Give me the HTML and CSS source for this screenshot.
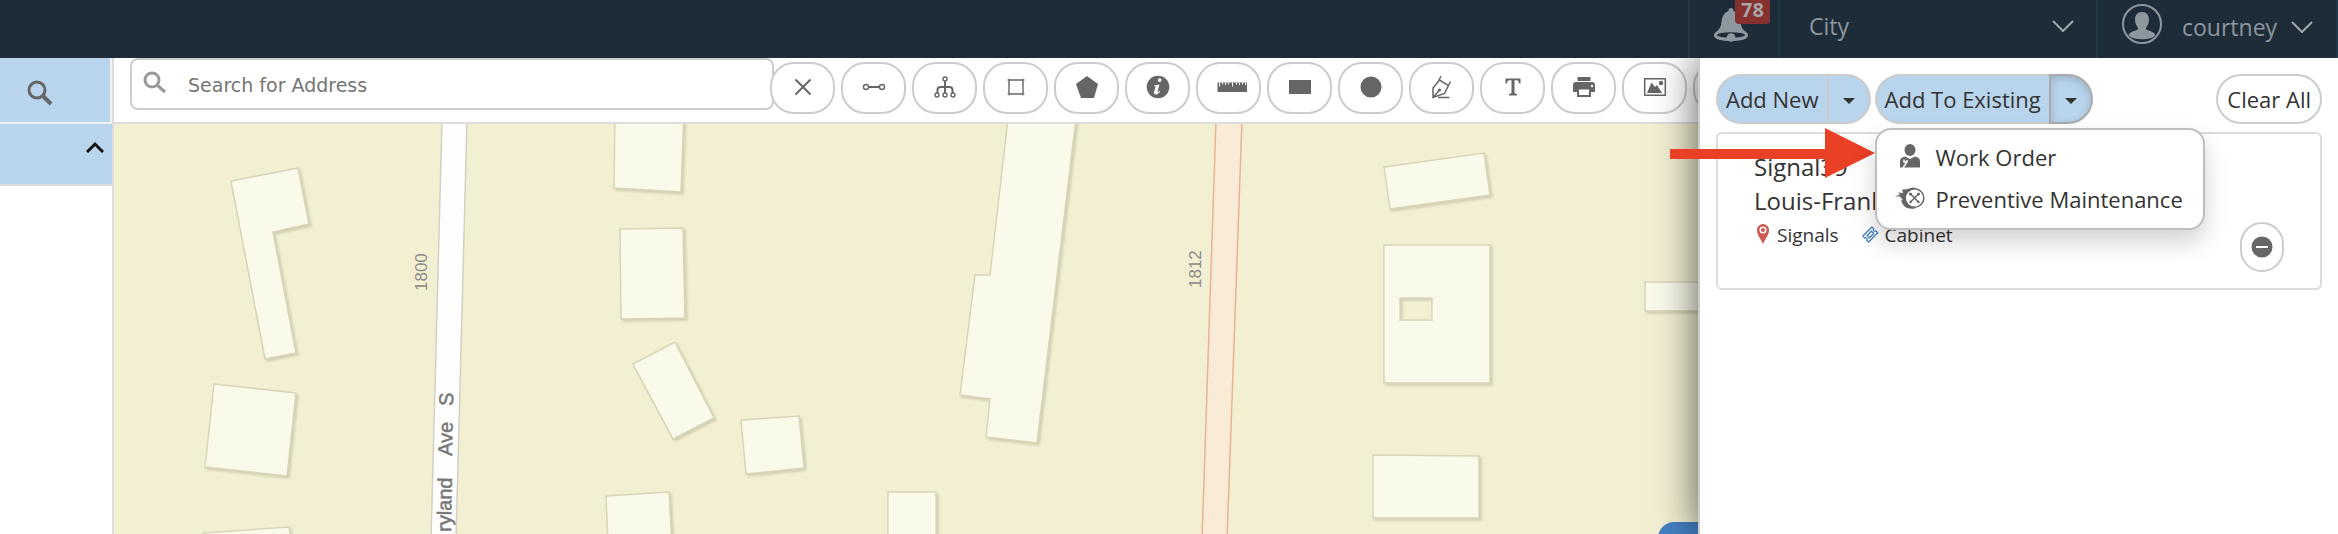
FILE: index.html
```html
<!DOCTYPE html>
<html lang="en">
<head>
<meta charset="utf-8">
<title>Asset map</title>
<link rel="stylesheet" href="styles.css">
</head>
<body>
<header class="topbar">
  <button class="topbar-cell alerts" aria-label="Notifications, 78 new">
    <svg class="bell" viewBox="0 0 34 34" aria-hidden="true"><path d="M17 0c1.600 0 2.500 1.300 2.500 3 4.500 1.500 6.500 6 7 11 .5 5 2.500 8 5.500 10 1.500 1 2 2 2 3.500C34 31.500 26 33 17 33S0 31.500 0 27.500C0 26 .5 25 2 24c3-2 5-5 5.500-10 .5-5 2.500-9.500 7-11 0-1.700.9-3 2.500-3z"/><ellipse class="bell-mouth" cx="17" cy="27" rx="14" ry="2.800"/><circle cx="17" cy="29.500" r="4.300"/></svg>
    <span class="badge">78</span>
  </button>
  <div class="topbar-cell city">
    <select class="city-select" aria-label="Organization"><option>City</option></select>
    <svg class="chevron" viewBox="0 0 22 12" aria-hidden="true"><path d="M1 1l10 10L21 1"/></svg>
  </div>
  <button class="topbar-cell user">
    <svg class="avatar" viewBox="0 0 40 40" aria-hidden="true"><circle class="avatar-ring" cx="20" cy="20" r="19"/><path d="M20 8c4.500 0 7 3 7 7.500 0 3-1 5.500-2.500 7.500-.8 1.200-.5 2.800 1 3.300 4 1.200 6.500 2 8 5-3 3.200-8 4-13.500 4s-10.500-.8-13.500-4c1.500-3 4-3.800 8-5 1.500-.5 1.800-2.100 1-3.300C14 21 13 18.500 13 15.500 13 11 15.500 8 20 8z"/></svg>
    <span>courtney</span>
    <svg class="chevron" viewBox="0 0 22 12" aria-hidden="true"><path d="M1 1l10 10L21 1"/></svg>
  </button>
</header>
<main class="workspace">
  <aside class="sidebar">
    <button class="side-search" aria-label="Search">
      <svg viewBox="0 0 26 26" aria-hidden="true"><circle cx="10" cy="10" r="8"/><path d="M16 16l8 8"/></svg>
    </button>
    <button class="side-toggle" aria-label="Collapse section">
      <svg viewBox="0 0 18 12" aria-hidden="true"><path d="M1 11l8-8 8 8"/></svg>
    </button>
  </aside>
  <section class="mapview">
    <div class="toolbar">
      <label class="address">
        <svg viewBox="0 0 24 24" aria-hidden="true"><circle cx="9" cy="9" r="7"/><path d="M14 14l8 7"/></svg>
        <input type="text" placeholder="Search for Address" aria-label="Search for Address">
      </label>
      <button class="tool" aria-label="Clear"><svg viewBox="0 0 32 24"><path class="line" d="M8.500 4.500l15 15M23.500 4.500l-15 15"/></svg></button>
      <button class="tool" aria-label="Line"><svg viewBox="0 0 32 24"><path class="line" d="M10 12h12"/><circle class="thin" cx="8" cy="12" r="2.500"/><circle class="thin" cx="24" cy="12" r="2.500"/></svg></button>
      <button class="tool" aria-label="Network"><svg viewBox="0 0 32 24"><path class="line" d="M16 6v12M8.500 18v-3q0-3 3-3h9q3 0 3 3v3"/><circle class="thin" cx="16" cy="4" r="2"/><circle class="thin" cx="8" cy="20" r="2"/><circle class="thin" cx="16" cy="20" r="2"/><circle class="thin" cx="24" cy="20" r="2"/></svg></button>
      <button class="tool" aria-label="Extent"><svg viewBox="0 0 32 24"><path class="thin" d="M9 5h14v14H9z"/><circle class="thin tiny" cx="9" cy="5" r="1"/><circle class="thin tiny" cx="23" cy="5" r="1"/><circle class="thin tiny" cx="9" cy="19" r="1"/><circle class="thin tiny" cx="23" cy="19" r="1"/></svg></button>
      <button class="tool" aria-label="Polygon"><svg viewBox="0 0 32 24"><path d="M16 1l11 8-4 14H10L5 9z"/></svg></button>
      <button class="tool" aria-label="Information"><svg viewBox="0 0 32 24"><circle cx="16" cy="12" r="11.300"/><path class="cut" d="M16 4.500a1.800 1.800 0 1 1 2.500 2.200A1.800 1.800 0 0 1 16 4.500zM12 10.500l5.500-1-2 7c-.3 1 .5.800 2-.8l.7.600c-1.700 2.300-3 3.200-4.500 3.200-1.600 0-2-1.200-1.500-3l1.200-4.200c.3-.9 0-1.100-1.400-1z"/></svg></button>
      <button class="tool" aria-label="Measure"><svg class="wide" viewBox="0 0 32 24"><path d="M1.500 7.500h29.500V17H1.500z"/><path class="cut" d="M3 7.500h1v4H3zM6 7.500h1v2H6zM9 7.500h1v2.500H9zM12 7.500h1v2h-1zM16 7.500h1v4h-1zM20 7.500h1v2h-1zM23 7.500h1v2.500h-1zM26 7.500h1v2h-1zM29 7.500h1v2.500h-1z"/></svg></button>
      <button class="tool" aria-label="Rectangle"><svg viewBox="0 0 32 24"><path d="M5 5h22v14H5z"/></svg></button>
      <button class="tool" aria-label="Circle"><svg viewBox="0 0 32 24"><circle cx="16" cy="12" r="10.500"/></svg></button>
      <button class="tool" aria-label="Freehand"><svg viewBox="0 0 32 24"><path class="pen" d="M7 22.500V13l6.500-8 9 5.500-4 8zM7 22.500l6-7M15 1l-2 4M22.500 10.500l2-4M12 22.500h11.500"/><circle cx="13.500" cy="15" r="1.600"/></svg></button>
      <button class="tool" aria-label="Text"><svg viewBox="0 0 32 24"><path d="M8.500 3.500h15v5H22c-.3-2.200-.8-3.200-2.500-3.200h-2V17c0 1.400.5 1.800 2.500 2v1.500h-8V19c2-.2 2.500-.6 2.500-2V5.300h-2c-1.700 0-2.200 1-2.500 3.200H8.500z"/></svg></button>
      <button class="tool" aria-label="Print"><svg viewBox="0 0 32 24"><path d="M9.500 2h13v4h-13zM8 7h16q3 0 3 3v7h-4v5H9v-5H5v-7q0-3 3-3z"/><path class="cut" d="M11 14.500h10V20H11z"/><circle class="cut" cx="24" cy="11" r="1.200"/></svg></button>
      <button class="tool" aria-label="Image"><svg viewBox="0 0 32 24"><path class="frame" d="M5.700 3.700h20.600v16.600H5.700z"/><path d="M8 18l4.500-10.500L16 12l2-2 5 8z"/><circle cx="22" cy="8" r="2.200"/></svg></button>
      <button class="tool" aria-label="More tools"></button>
    </div>
    <div class="canvas">
      <svg class="basemap" viewBox="114 124 1584 410" preserveAspectRatio="xMinYMin slice" role="img" aria-label="Street map">
        <path class="street" d="M442 120L431 540H456L467 120z"/>
        <path class="avenue" d="M1216 120L1202 540H1227L1242 120z"/>
        <g class="buildings">
          <path d="M231 181L298 168L309 224L273 232L296 353L265 359z"/>
          <path d="M214 384L296 393L287 476L205 467z"/>
          <path d="M203 533L289 527L293 550H204z"/>
          <path d="M615 110H684L681 192L614 188z"/>
          <path d="M620 229L683 228L685 318L621 319z"/>
          <path d="M633 364L675 342L714 418L673 439z"/>
          <path d="M741 420L799 416L804 468L746 474z"/>
          <path d="M606 496L669 492L672 545H608z"/>
          <path d="M888 492H936V545H888z"/>
          <path d="M1009 110H1077L1037 443L986 437L990 399L960 395L975 275L990 275z"/>
          <path d="M1384 167L1484 153L1490 195L1390 209z"/>
          <path fill-rule="evenodd" d="M1384 245H1490V383H1384zM1400 298V320H1432V298z"/>
          <path d="M1373 455L1479 456V518H1373z"/>
          <path d="M1645 282H1720V311H1645z"/>
        </g>
        <g class="numbers">
          <text transform="translate(427 291) rotate(-90)">1800</text>
          <text transform="translate(1201 288) rotate(-90)">1812</text>
        </g>
        <g class="names">
          <text transform="translate(453 406) rotate(-89)">S</text>
          <text transform="translate(452 456) rotate(-89)">Ave</text>
          <text transform="translate(451 532) rotate(-89)">ryland</text>
        </g>
      </svg>
      <button class="map-action" aria-label="Map action"></button>
    </div>
  </section>
  <section class="panel">
    <div class="actions">
      <div class="split">
        <button class="pill main">Add New</button><button class="pill caret" aria-label="Add new options"><svg viewBox="0 0 12 6"><path d="M0 0h12L6 6z"/></svg></button>
      </div>
      <div class="split">
        <button class="pill main">Add To Existing</button><button class="pill caret open" aria-label="Add to existing options" aria-expanded="true"><svg viewBox="0 0 12 6"><path d="M0 0h12L6 6z"/></svg></button>
        <div class="menu">
          <button class="menu-item"><svg viewBox="0 0 30 24"><ellipse cx="15" cy="6" rx="5.500" ry="6"/><path d="M5 23.500V17q0-3.500 5-4.500l5 2.500 5-2.500q5 1 5 4.500v6.500z"/><path class="cut-line" d="M8 24l3.500-5.500M9 15.500v2.500h3v-2"/></svg>Work Order</button>
          <button class="menu-item"><svg viewBox="0 0 30 24"><path d="M0 10.500l5-2-2-2 5 .5-1-4c4 2 7-1.500 13-1.500v21c-7 1-12-1-14-8.500l2 .5-3-4z"/><circle class="gauge" cx="19.500" cy="12" r="9.300"/><path class="thin" d="M15.500 8l8 8M23.500 8l-8 8"/><circle cx="15.500" cy="8" r="1.500"/><circle cx="23.500" cy="8" r="1.500"/><circle cx="15.500" cy="16" r="1.200"/><circle cx="23.500" cy="16" r="1.200"/></svg>Preventive Maintenance</button>
        </div>
      </div>
      <button class="pill clear">Clear All</button>
    </div>
    <article class="card">
      <div class="card-body">
        <p class="card-title">Signal39</p>
        <p class="card-title">Louis-Frank</p>
        <div class="tags">
          <span class="tag"><svg class="pin" viewBox="0 0 12 20"><path d="M6 0a6 6 0 0 1 6 6.500C12 11 8 15 6 20 4 15 0 11 0 6.500A6 6 0 0 1 6 0z"/><circle cx="6" cy="6" r="2.800"/></svg>Signals</span>
          <span class="tag"><svg class="ticket" viewBox="0 0 18 18"><path d="M10.500 1l2 2a1.500 1.500 0 0 0 2.200 2.200l2 2L7 17l-2-2a1.500 1.500 0 0 0-2.200-2.200l-2-2z"/><path d="M10 5.500L12.500 8 8 12.500 5.500 10z"/></svg>Cabinet</span>
        </div>
      </div>
      <button class="remove" aria-label="Remove"><svg viewBox="0 0 22 22"><circle cx="11" cy="11" r="10.500"/><path d="M5 11h12"/></svg></button>
    </article>
    <svg class="pointer" viewBox="0 0 205 50" aria-hidden="true"><path d="M0 21h155V0l50 25-50 25V31H0z"/></svg>
  </section>
</main>
</body>
</html>
```
FILE: styles.css
```css
* { box-sizing: border-box; }
body {
  margin: 0;
  height: 100vh;
  display: flex;
  flex-direction: column;
  overflow: hidden;
  font-family: "Open Sans", "Noto Sans", sans-serif;
  font-size: 22px;
  color: #333;
  background: #fff;
}
button, select, input { font: inherit; color: inherit; margin: 0; }
button { padding: 0; border: 0; background: none; }
p { margin: 0; }
svg { display: block; flex: none; }

.topbar {
  flex: none;
  height: 58px;
  display: flex;
  justify-content: flex-end;
  background: #1e2c3a;
  color: #8e979e;
  font-size: 23px;
}
.topbar-cell {
  display: flex;
  align-items: center;
  border-left: 2px solid #223748;
}
.alerts { position: relative; width: 90px; padding: 0 0 8px 24px; }
.bell { width: 34px; height: 34px; fill: #8e979e; }
.bell-mouth { fill: #1e2c3a; }
.badge {
  position: absolute;
  top: -4px;
  left: 45px;
  padding: 0 6px;
  border-radius: 4px;
  background: #86302f;
  color: #a9a4a6;
  font-size: 20px;
  line-height: 28px;
  font-weight: 700;
}
.city { position: relative; width: 318px; padding: 0 22px 6px 29px; }
.city-select {
  appearance: none;
  flex: 1;
  border: 0;
  padding: 0;
  background: none;
}
.chevron { width: 22px; height: 12px; fill: none; stroke: #a0a8ae; stroke-width: 2; }
.user { width: 242px; padding: 0 23px 4px 24px; border-right: 2px solid #223748; }
.avatar { width: 40px; height: 40px; margin: 0 20px 6px 0; fill: #8e979e; }
.avatar-ring { fill: none; stroke: #8e979e; stroke-width: 2; }
.user .chevron { margin-left: auto; }

.workspace {
  flex: 1;
  min-height: 0;
  display: grid;
  grid-template-columns: 114px minmax(0, 1fr) 640px;
}

.sidebar {
  display: flex;
  flex-direction: column;
  border-right: 2px solid #dcdcdc;
}
.side-search {
  height: 66px;
  padding: 0 0 0 27px;
  background: #b9d5ed;
  border-right: 2px solid #f0f0f0;
  border-bottom: 2px solid #f0f0f0;
}
.side-search svg { width: 26px; height: 26px; margin-top: 6px; fill: none; stroke: #666; stroke-width: 3; }
.side-search path { stroke-width: 4; }
.side-toggle {
  height: 62px;
  display: flex;
  justify-content: flex-end;
  padding: 17px 8px 0 0;
  background: #b9d5ed;
  border-bottom: 2px solid #dcdcdc;
}
.side-toggle svg { width: 18px; height: 12px; fill: none; stroke: #111; stroke-width: 3; }

.mapview {
  min-width: 0;
  display: flex;
  flex-direction: column;
  overflow: hidden;
}
.toolbar {
  flex: none;
  height: 66px;
  display: flex;
  gap: 6px;
  padding-left: 16px;
  border-bottom: 2px solid #dcdcdc;
}
.address {
  flex: none;
  width: 644px;
  height: 52px;
  display: flex;
  gap: 21px;
  padding-left: 11px;
  margin-right: -10px;
  border: 2px solid #ccc;
  border-radius: 8px;
}
.address svg { width: 24px; height: 24px; margin-top: 11px; fill: none; stroke: #999; stroke-width: 3; }
.address input {
  flex: 1;
  min-width: 0;
  border: 0;
  padding: 2px 0 0;
  background: none;
  outline: 0;
  font-family: "DejaVu Sans", sans-serif;
  font-size: 19px;
}
.address input::placeholder { color: #757575; opacity: 1; }
.tool {
  flex: none;
  width: 65px;
  height: 52px;
  margin-top: 4px;
  padding-bottom: 3px;
  display: flex;
  align-items: center;
  justify-content: center;
  background: #fff;
  border: 2px solid #ccc;
  border-radius: 24px;
}
.tool svg { width: 32px; height: 24px; fill: #666; }
.tool .line { fill: none; stroke: #666; stroke-width: 2; }
.tool .thin { fill: #fff; stroke: #666; stroke-width: 1.400; }
.tool .tiny { stroke-width: 1; }
.tool .cut { fill: #fff; }
.tool .pen { fill: none; stroke: #666; stroke-width: 1.500; }
.tool .frame { fill: #fff; stroke: #666; stroke-width: 1.500; }
.tool .wide { margin-left: 6px; }

.canvas { position: relative; flex: 1; min-height: 0; background: #f3efd2; }
.basemap { width: 100%; height: 100%; }
.street { fill: #fefefe; stroke: #d3d0c2; stroke-width: 1.500; }
.avenue { fill: #f9ebd6; stroke: #e9b394; stroke-width: 1.500; }
.buildings {
  fill: #f9faea;
  stroke: #d9d5b9;
  stroke-width: 1.500;
  filter: drop-shadow(2px 2px 1px #d3cfb3);
}
.numbers { font: 17px "Liberation Sans", sans-serif; fill: #8c8c88; }
.names { font: 20px "Liberation Sans", sans-serif; fill: #777; stroke: #777; stroke-width: 0.500; }
.map-action {
  position: absolute;
  right: -24px;
  bottom: -52px;
  width: 64px;
  height: 64px;
  border-radius: 16px;
  background: #4481c3;
}

.panel {
  position: relative;
  z-index: 1;
  padding: 16px 16px 0 16px;
  background: #fff;
  border-left: 2px solid #ccc;
  box-shadow: 0 0 40px rgba(0, 0, 0, 0.65);
  clip-path: inset(0 0 0 -60px);
}
.actions { display: flex; gap: 4px; }
.split { position: relative; display: flex; }
.pill {
  height: 50px;
  padding: 0 8px;
  border: 2px solid #ccc;
  border-radius: 25px;
  line-height: 46px;
  white-space: nowrap;
}
.main { background: #b9d5ed; border-right: 0; border-radius: 25px 0 0 25px; }
.caret {
  width: 44px;
  display: flex;
  align-items: center;
  justify-content: center;
  background: #b9d5ed;
  border-radius: 0 25px 25px 0;
}
.caret svg { width: 12px; height: 6px; margin-top: 4px; fill: #333; }
.open { border-color: #aaa; box-shadow: inset 0 3px 8px rgba(0, 0, 0, 0.16); }
.clear { margin-left: auto; padding: 0 9px; }
.menu {
  position: absolute;
  z-index: 2;
  top: 54px;
  left: 0;
  width: 330px;
  padding: 6px 0 8px;
  background: #fff;
  border: 2px solid #bfbfbf;
  border-radius: 16px;
  box-shadow: 0 12px 24px rgba(0, 0, 0, 0.18);
}
.menu-item {
  width: 100%;
  height: 42px;
  display: flex;
  align-items: center;
  gap: 11px;
  padding-left: 18px;
  white-space: nowrap;
}
.menu-item svg { width: 30px; height: 24px; margin-bottom: 2px; fill: #666; }
.gauge { fill: #fff; stroke: #666; stroke-width: 1.500; }
.menu-item .thin { fill: none; stroke: #666; stroke-width: 1.500; }
.cut-line { fill: none; stroke: #fff; stroke-width: 1.500; }

.card {
  display: flex;
  justify-content: space-between;
  height: 158px;
  margin-top: 8px;
  padding: 16px 36px 16px 36px;
  border: 2px solid #dcdcdc;
  border-radius: 6px;
}
.card-title { font-size: 24px; line-height: 34px; }
.tags { display: flex; gap: 23px; font-size: 19px; line-height: 34px; }
.tag { display: flex; align-items: center; gap: 8px; }
.pin { width: 12px; height: 20px; margin: 0 0 2px 3px; fill: #cc5a52; }
.pin circle { fill: #cc5a52; stroke: #fff; stroke-width: 1.500; }
.ticket { width: 17px; height: 17px; margin-bottom: 2px; fill: none; stroke: #4481c3; stroke-width: 1.300; }
.tag:last-child { gap: 6px; }
.remove {
  align-self: flex-end;
  width: 44px;
  height: 50px;
  display: flex;
  align-items: center;
  justify-content: center;
  border: 2px solid #ccc;
  border-radius: 22px;
}
.remove svg { width: 22px; height: 22px; fill: #666; stroke: #fff; stroke-width: 0; }
.remove path { stroke-width: 2; }
.pointer {
  position: absolute;
  top: 70px;
  left: -30px;
  width: 205px;
  height: 50px;
  fill: #ea4025;
}
```
